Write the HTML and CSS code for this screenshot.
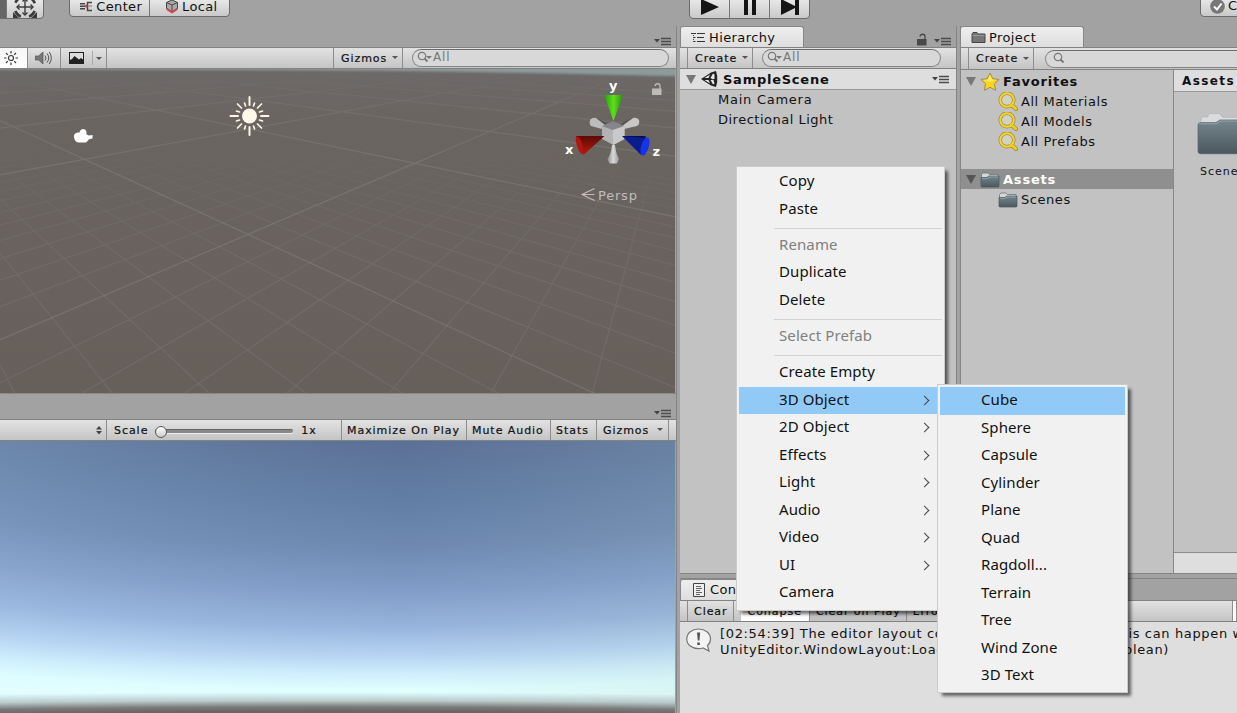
FILE: index.html
```html
<!DOCTYPE html>
<html lang="en">
<head>
	<meta charset="utf-8" />
	<meta name="viewport" content="width=device-width, initial-scale=1" />
	<title>SampleScene</title>
	<link rel="stylesheet" href="styles.css">
</head>
<body>

	<svg width="0" height="0" class="defs">
		<symbol id="i-menu" viewBox="0 0 18 9">
			<path d="M0 2h6L3 5.5z" fill="#444" />
			<path d="M7 1.5h10M7 4.5h10M7 7.5h10" stroke="#4c4c4c" stroke-width="1.3" />
		</symbol>
		<symbol id="i-lock" viewBox="0 0 10 13">
			<path d="M0 6h9.500v6.500H0z" fill="currentColor" />
			<path d="M3 3.500C3.500 .5 8 .5 8 3.500V6.500" fill="none" stroke="currentColor" stroke-width="1.300" />
		</symbol>
		<symbol id="i-find" viewBox="0 0 16 12">
			<circle cx="5" cy="5" r="3.700" fill="none" stroke="#777" stroke-width="1.200" />
			<path d="M7.500 7.500l3 3" stroke="#777" stroke-width="1.800" />
		</symbol>
		<symbol id="i-star" viewBox="0 0 18 18">
			<path d="M9 1l2.500 5 5.700.7-4.200 3.900 1.100 5.900L9 13.800l-5.100 2.700L5 10.600.8 6.700 6.500 6z" fill="#fbd51b" stroke="#9d8d50" stroke-width=".9" stroke-linejoin="round" />
			<path d="M9 2.500l1.900 4.300 4 .4-6 1.500-5.600-1.300L7 7z" fill="#fff27a" opacity=".7" />
		</symbol>
		<symbol id="i-query" viewBox="0 0 20 19">
			<path d="M13 12.500l5 4.500" stroke="#9a8a45" stroke-width="4.200" stroke-linecap="round" />
			<circle cx="9" cy="8" r="6.800" fill="#d2d1c6" stroke="#9a8a45" stroke-width="3.400" />
			<circle cx="9" cy="8" r="6.800" fill="none" stroke="#f7d62c" stroke-width="2" />
			<path d="M13.200 12.500l4.600 4.300" stroke="#f4cd16" stroke-width="2.800" stroke-linecap="round" />
		</symbol>
		<symbol id="i-folder" viewBox="0 0 20 17">
			<path d="M1.500 15V3.500L3 2h5l1.500 1.500H18V15z" fill="#d5d8d9" stroke="#6e7679" stroke-width=".8" />
			<path d="M1 6.500h6l1.500-1.500H19V15q0 1-1 1H2q-1 0-1-1z" fill="url(#g-folder)" stroke="#4b565b" stroke-width=".7" />
			<path d="M2 7.500h5.500L9 6h9" fill="none" stroke="#96a9b1" stroke-width=".8" />
		</symbol>
		<linearGradient id="g-folder" x1="0" y1="0" x2="0" y2="1">
			<stop offset="0" stop-color="#76868e" />
			<stop offset="1" stop-color="#4a585e" />
		</linearGradient>
	</svg>

	<header class="topbar">
		<div class="btns tools">
			<span class="on"></span>
			<span>
				<svg width="26" height="26" viewBox="0 0 26 26" fill="none" stroke="#3b3b3b" stroke-width="2">
					<path d="M13 5v16M5 13h16" stroke-width="1.400" />
					<path d="M10.500 7.500L13 5l2.500 2.500M10.500 18.500l2.500 2.500 2.500-2.500M7.500 10.500L5 13l2.500 2.500M18.500 10.500l2.500 2.500-2.500 2.500" stroke-width="1.400" />
					<circle cx="13" cy="13" r="10.500" stroke-width="2.600" stroke-dasharray="8 8.500" stroke-dashoffset="-4.200" />
					<path d="M1 18v6h6zM25 18v6h-6z" fill="#3b3b3b" stroke="none" />
				</svg>
			</span>
		</div>
		<div class="btns pivot">
			<span>
				<svg width="13" height="11" viewBox="0 0 13 11"><path d="M0 2h5v1.500H0zM0 4.500h5V6H0zM0 7h5v1.500H0z" fill="#444" /><path d="M12 1.500H7.500v8H12" fill="none" stroke="#444" stroke-width="1.500" /><path d="M8.500 5h3.500" stroke="#777" /><circle cx="6.500" cy="5" r="1.500" fill="#c33" /></svg>
				Center
			</span>
			<span>
				<svg width="14" height="15" viewBox="0 0 14 15"><path d="M7 1l5.500 2.500v6L7 13 1.500 9.500v-6z" fill="#aaa" stroke="#444" /><path d="M1.500 3.500L7 6l5.500-2.500M7 6v6" fill="none" stroke="#444" /><path d="M1.500 8.500L7 12l5.500-3.500V11L7 14.500 1.500 11z" fill="#c9484c" /></svg>
				Local
			</span>
		</div>
		<div class="btns play">
			<span><svg width="20" height="16"><path d="M1 0l18 8L1 16z" fill="#151515" /></svg></span>
			<span><svg width="14" height="16"><path d="M1 0h4v16H1zM9 0h4v16H9z" fill="#151515" /></svg></span>
			<span><svg width="20" height="16"><path d="M1 0l14 7V0h4v16h-4V9L1 16z" fill="#151515" /></svg></span>
		</div>
		<div class="btns collab">
			<span>
				<svg width="15" height="15" viewBox="0 0 15 15"><circle cx="7.500" cy="7.500" r="7.300" fill="#777" /><path d="M4 7.500l3 3 4.500-6" fill="none" stroke="#fff" stroke-width="2" /></svg>
				Collab
			</span>
		</div>
	</header>

	<main>

		<section class="views">
			<div class="tabbar scene-tabs"><svg class="menu-icon" width="18" height="9"><use href="#i-menu" /></svg></div>
			<div class="toolbar">
				<span class="tb sun on">
					<svg width="16" height="16" viewBox="0 0 16 16" fill="none" stroke="#3a3a3a" stroke-width="1.200"><circle cx="8" cy="8" r="2.500" /><path d="M8 1v2.500M8 12.500V15M1 8h2.500M12.500 8H15M3 3l1.800 1.800M11.200 11.200L13 13M13 3l-1.800 1.800M3 13l1.800-1.800" /></svg>
				</span>
				<span class="tb sound">
					<svg width="18" height="14" viewBox="0 0 18 14"><path d="M0 5h3.500L8 1v12L3.500 9H0z" fill="#777" stroke="#555" stroke-width=".7" /><path d="M10 4.500q2 2.500 0 5M12 2.500q3.500 4.500 0 9M14.300 1q4 6 0 12" fill="none" stroke="#555" /></svg>
				</span>
				<span class="tb fx">
					<svg width="15" height="12" viewBox="0 0 15 12"><path d="M0 0h15v12H0z" fill="#222" /><path d="M1 1h13v6.500L12 6l-2 1.500L5.500 4 3 7 1 8z" fill="#ddd" /></svg>
					<i></i><b class="caret"></b>
				</span>
				<span class="fill"></span>
				<span class="tb gizmos">Gizmos <b class="caret"></b></span>
				<div class="search wide"><svg width="16" height="12"><use href="#i-find" /></svg><b class="caret"></b>All</div>
			</div>
			<div class="scene">
				<svg width="675" height="324" viewBox="0 69 675 324">
					<defs>
						<linearGradient id="g-ground" x1="0" y1="0" x2="0" y2="1">
							<stop offset="0" stop-color="#6d6969" />
							<stop offset=".15" stop-color="#6a6561" />
							<stop offset="1" stop-color="#675f5a" />
						</linearGradient>
						<linearGradient id="g-fade" x1="0" y1="0" x2="0" y2="1">
							<stop offset=".2" stop-color="#000" />
							<stop offset=".4" stop-color="#777" />
							<stop offset=".65" stop-color="#fff" />
						</linearGradient>
						<linearGradient id="g-far" x1="0" y1="0" x2="0" y2="1">
							<stop offset=".01" stop-color="#000" />
							<stop offset=".12" stop-color="#999" />
							<stop offset=".3" stop-color="#fff" />
						</linearGradient>
						<linearGradient id="g-red" x1="0" y1="0" x2="0" y2="1"><stop offset="0" stop-color="#5c0a05" /><stop offset="1" stop-color="#b51a10" /></linearGradient>
						<linearGradient id="g-green"><stop offset="0" stop-color="#2c9a08" /><stop offset=".5" stop-color="#5be01c" /><stop offset="1" stop-color="#2b8f0a" /></linearGradient>
						<linearGradient id="g-grey"><stop offset="0" stop-color="#8f8f8f" /><stop offset=".5" stop-color="#d8d8d8" /><stop offset="1" stop-color="#999" /></linearGradient>
						<filter id="soft"><feGaussianBlur stdDeviation="1.300" /></filter>
						<mask id="m-fade" maskUnits="userSpaceOnUse" x="0" y="69" width="675" height="324"><rect y="69" width="675" height="324" fill="url(#g-fade)" /></mask>
						<mask id="m-far" maskUnits="userSpaceOnUse" x="0" y="69" width="675" height="324"><rect y="69" width="675" height="324" fill="url(#g-far)" /></mask>
					</defs>
					<rect y="69" width="675" height="324" fill="url(#g-ground)" />
					<g id="minor" mask="url(#m-fade)" fill="none" stroke="#8b8e8a" stroke-opacity=".25" stroke-width="1.200"></g>
					<g id="major" mask="url(#m-far)" fill="none" stroke="#8e908d" stroke-opacity=".36" stroke-width="1.300"></g>
					<path d="M-5 60H685V76.500Q500 71.500 340 70.500T-5 69.500z" fill="#8d9a9b" filter="url(#soft)" />

					<!-- camera -->
					<path d="M74 137q-.5-4 4-4.500h1.500q.5-3.500 4-3.500 3 .5 3 3.500v2l2.500 1 3.500-.5v3.500l-3 .5-3.500 3.500h-8q-3.500-1-4-5.500z" fill="#fff" />

					<!-- directional light -->
					<g stroke="#fbf6e6" stroke-width="2" stroke-linecap="round">
						<circle cx="249.500" cy="116" r="7.500" fill="#fdf8e8" stroke="none" />
						<path d="M249.500 97v8M249.500 127v8M230.500 116h7.500M261 116h7.500" />
						<path d="M237.500 104l4 4M257.500 124l4 4M261.500 104l-4 4M241.500 124l-4 4M244.500 103l1 3M254.500 103l-1 3M244.500 129l1-3M236.500 111l3 1M262.500 111l-3 1M236.500 121l3-1M262.500 121l-3-1M254.500 129l-1-3" stroke-width="1.700" />
					</g>

					<!-- orientation gizmo -->
					<path d="M597 118l10 5.500-1 3-9-3.500z" fill="#555" />
					<path d="M590 120q2-3 6-2l9 7-3 4-11-3q-2-2-1-6z" fill="#bcbcbc" />
					<path d="M632 118l-12 6 2 3 9-4z" fill="#555" />
					<path d="M639 120q-2-3-6-2l-11 8 2 3 13-3q3-2 2-6z" fill="#c7c7c7" />
					<path d="M602 126l11-4 11.500 4v13l-11 6-11.500-6z" fill="#b3b3b5" />
					<path d="M602 126l11-4.500 11.500 4.500-11.500 4z" fill="#85858b" />
					<path d="M613 130l11.500-4v13l-11.500 6z" fill="#c9c9c9" />
					<path d="M604 95h19l-9.500 26z" fill="url(#g-green)" />
					<path d="M576 136l28.500 0-20.500 18.500q-7-6-8-18.500z" fill="url(#g-red)" />
					<path d="M576 136.500q4-1 6 7t2 11q-4 0-6.500-7t-1.500-11z" fill="#b3150d" />
					<path d="M622 136h24l-5 19z" fill="#0b1c90" />
					<path d="M622 136h21l3 2z" fill="#050d49" />
					<ellipse cx="645" cy="146.500" rx="3.800" ry="9.400" transform="rotate(17 645 146.500)" fill="#1634e8" />
					<path d="M612 145h3q1 9 4 14l-2 4.500h-7.500l-2-4.500q4-6 4.500-14z" fill="url(#g-grey)" />
					<g class="axis">
						<text x="609" y="90">y</text>
						<text x="565" y="153.500">x</text>
						<text x="652.500" y="156">z</text>
					</g>
					<path d="M594.500 188.500l-12.500 6 12.500 6M582 194.500h12.500" fill="none" stroke="#c0bebb" stroke-width="1.100" />
					<text class="persp" x="598" y="199.500">Persp</text>
					<svg x="652" y="82.500" width="10" height="13" color="#bdbbb9"><use href="#i-lock" /></svg>
				</svg>
			</div>

			<div class="tabbar game-tabs"><svg class="menu-icon" width="18" height="9"><use href="#i-menu" /></svg></div>
			<div class="toolbar game-bar">
				<span class="tb aspect"><svg width="7" height="9"><path d="M0 3.500h6L3 0zM0 5h6L3 8.500z" fill="#444" /></svg></span>
				<span class="tb scale">Scale <span class="slider"><i></i></span> 1x</span>
				<span class="tb max">Maximize On Play</span>
				<span class="tb mute">Mute Audio</span>
				<span class="tb stats">Stats</span>
				<span class="tb giz2">Gizmos <i></i><b class="caret"></b></span>
			</div>
			<div class="game"></div>
		</section>

		<div class="right">
			<div class="upper">

				<section class="hierarchy">
					<div class="tabbar">
						<div class="tab"><svg width="15" height="12" viewBox="0 0 15 12"><path d="M0 1.500h2M3 1.500h2M6 1.500h8M3 5.500h1.500M6 5.500h7M3 9.500h1.500M6 9.500h8" stroke="#333" stroke-width="1.200" /><path d="M2.500 1v9" stroke="#444" stroke-dasharray="1 1" /></svg>Hierarchy</div>
						<svg class="lock" width="10" height="13"><use href="#i-lock" /></svg>
						<svg class="menu-icon" width="18" height="9"><use href="#i-menu" /></svg>
					</div>
					<div class="toolbar">
						<span class="tb lead"></span>
						<span class="tb create">Create <b class="caret"></b></span>
						<div class="search"><svg width="16" height="12"><use href="#i-find" /></svg><b class="caret"></b>All</div>
					</div>
					<div class="scene-row">
						<b class="fold"></b>
						<svg width="18" height="18" viewBox="0 0 18 18"><path d="M1 9L11 2.500l5-1.500 1.200 5v6L16 17l-5-1.500z" fill="#222" /><path d="M4.500 8l5.500-3.500L8.500 8zM4.500 10H8.500l1.500 3.500zM10.500 8L13 3.500l1.500 1L14.500 9l-2 .2zM10.500 10h3l1 3.500-1.500 1z" fill="#e8e8e8" /></svg>
						<strong>SampleScene</strong>
						<svg class="menu-icon" width="18" height="9"><use href="#i-menu" /></svg>
					</div>
					<ul>
						<li>Main Camera</li>
						<li class="long">Directional Light</li>
					</ul>
				</section>

				<section class="project">
					<div class="tabbar">
						<div class="tab"><svg width="15" height="13" viewBox="0 0 15 13"><path d="M1 11.500V3l1-1.500h4L7.500 3H14v8.500z" fill="#777" stroke="#444" /><path d="M1.500 4.500h12" stroke="#999" /></svg>Project</div>
					</div>
					<div class="toolbar">
						<span class="tb lead"></span>
						<span class="tb create">Create <b class="caret"></b></span>
						<div class="search cut"><svg width="16" height="12"><use href="#i-find" /></svg></div>
					</div>
					<div class="browser">
						<div class="tree">
							<div class="row"><b class="fold"></b><svg width="20" height="20"><use href="#i-star" /></svg><strong>Favorites</strong></div>
							<div class="row sub"><svg width="20" height="19"><use href="#i-query" /></svg>All Materials</div>
							<div class="row sub"><svg width="20" height="19"><use href="#i-query" /></svg>All Models</div>
							<div class="row sub"><svg width="20" height="19"><use href="#i-query" /></svg>All Prefabs</div>
							<div class="row selected"><b class="fold"></b><svg width="20" height="17"><use href="#i-folder" /></svg><strong>Assets</strong></div>
							<div class="row sub"><svg width="20" height="17"><use href="#i-folder" /></svg>Scenes</div>
						</div>
						<div class="content">
							<div class="crumb">Assets</div>
							<div class="asset">
								<svg width="54" height="44" viewBox="0 0 20 17" preserveAspectRatio="none"><path d="M1 6.500L1.500 3q.1-.6.700-.7H4q.2-1.300.8-1.300h3.700l1 1.400h9l.5 4z" fill="#d9dbdc" stroke="#aaa" stroke-width=".2" /><path d="M.4 5.500Q.4 4.500 1.400 4.500H7L8.500 3.500H19.600V15.500q0 1-1 1H1.400q-1 0-1-1z" fill="url(#g-folder)" stroke="#54626a" stroke-width=".3" /><path d="M.8 4.900H7.200L8.600 3.900H19" fill="none" stroke="#8fa3ad" stroke-width=".4" /></svg>
								<span>Scenes</span>
							</div>
							<div class="status"></div>
						</div>
					</div>
				</section>

			</div>

			<section class="console">
				<div class="tabbar">
					<div class="tab"><svg width="12" height="14" viewBox="0 0 12 14"><path d="M.5 .5h11v13H.5z" fill="#eee" stroke="#444" /><path d="M3 3.500h5M3 5.500h6M3 7.500h4M3 9.500h6M3 11.500h4" stroke="#555" stroke-width=".9" /></svg>Console</div>
				</div>
				<div class="toolbar">
					<span class="tb lead"></span>
					<span class="tb clear">Clear</span>
					<span class="gap"></span>
					<span class="tb on">Collapse</span>
					<span class="tb on2">Clear on Play</span>
					<span class="tb on2">Error Pause</span>
					<span class="fill"></span>
					<span class="tb on count"></span>
				</div>
				<div class="log">
					<svg width="26" height="25" viewBox="0 0 26 25"><path d="M12.500 1C19 1 24.500 5 24.500 11q0 4-3 6.500l1.500 5.500-6-3q-2 .6-4.500.6C6 20.600.8 17 .8 11S6 1 12.500 1z" fill="#f3f3f3" stroke="#777" stroke-width="1.200" /><path d="M11 4.500h3.200l-.8 8h-1.600zM11.300 14.500h2.600v2.500h-2.600z" fill="#555" /></svg>
					<div class="entry">
						<p class="l1">[02:54:39] The editor layout could not be fully loaded, this can happen when</p>
						<p class="l2">UnityEditor.WindowLayout:LoadWindowLayout(String, Boolean)</p>
					</div>
				</div>
			</section>
		</div>

	</main>

	<nav class="menu context">
		<a>Copy</a>
		<a>Paste</a>
		<hr>
		<a class="off">Rename</a>
		<a>Duplicate</a>
		<a>Delete</a>
		<hr>
		<a class="off">Select Prefab</a>
		<hr>
		<a>Create Empty</a>
		<a class="more active">3D Object</a>
		<a class="more">2D Object</a>
		<a class="more">Effects</a>
		<a class="more">Light</a>
		<a class="more">Audio</a>
		<a class="more">Video</a>
		<a class="more">UI</a>
		<a>Camera</a>
	</nav>

	<nav class="menu submenu">
		<a class="active">Cube</a>
		<a>Sphere</a>
		<a>Capsule</a>
		<a>Cylinder</a>
		<a>Plane</a>
		<a>Quad</a>
		<a>Ragdoll...</a>
		<a>Terrain</a>
		<a>Tree</a>
		<a>Wind Zone</a>
		<a>3D Text</a>
	</nav>

	<script src="grid.js"></script>
</body>
</html>
```
FILE: styles.css
```css
* {
	box-sizing: border-box;
}

body {
	margin: 0;
	width: 1237px;
	height: 713px;
	overflow: hidden;
	background: #a2a2a2;
	color: #111;
	font: 13px/20px "DejaVu Sans", sans-serif;
	letter-spacing: 0.75px;
	white-space: nowrap;
	display: flex;
	flex-direction: column;
}
.defs {
	position: absolute;
}
svg {
	flex: none;
}
ul, p {
	margin: 0;
	padding: 0;
	list-style: none;
}


/*Top toolbar*/
.topbar {
	height: 26px;
	flex: none;
	display: flex;
	align-items: flex-start;
	overflow: hidden;
}
.btns {
	display: flex;
	height: 22px;
	margin-top: -5px;
	border: 1px solid #6b6b6b;
	border-radius: 4px;
	background: linear-gradient(#eee, #c9c9c9);
	overflow: hidden;
	flex: none;
}
.btns span {
	display: flex;
	align-items: center;
	justify-content: center;
	gap: 3px;
	letter-spacing: 0.35px;
}
.btns span + span {
	border-left: 1px solid #777;
}
.tools {
	width: 50px;
	height: 24px;
	margin-left: -6px;
}
.tools .on {
	width: 11px;
	background: #666;
}
.tools span:last-child {
	flex: 1;
}
.pivot {
	width: 161px;
	margin-left: 25px;
}
.pivot span {
	width: 81px;
	padding: 1px 0 0 3px;
}
.play {
	width: 121px;
	height: 24px;
	margin-left: 459px;
}
.play span {
	flex: 1;
}
.collab {
	width: 80px;
	margin-left: 390px;
}
.collab span {
	padding-left: 9px;
}


/*Layout*/
main {
	flex: 1;
	display: flex;
	min-height: 0;
}
.views {
	width: 677px;
	flex: none;
	display: flex;
	flex-direction: column;
	border-right: 1px solid #858585;
}
.right {
	margin-left: 3px;
	flex: 1;
	min-width: 0;
	overflow: hidden;
	display: flex;
	flex-direction: column;
}
.upper {
	display: flex;
	height: 548px;
	gap: 3px;
	margin-bottom: 4px;
}


/*Tabs and toolbars*/
.tabbar {
	height: 21px;
	flex: none;
	display: flex;
	align-items: flex-end;
	justify-content: flex-end;
}
.tab {
	height: 21px;
	display: flex;
	align-items: center;
	gap: 3px;
	padding: 1px 0 0 10px;
	margin-right: auto;
	border: 1px solid #888;
	border-bottom: 0;
	border-radius: 3px 3px 0 0;
	background: linear-gradient(#eee, #dedede);
	letter-spacing: 0.4px;
}
.menu-icon {
	margin: 0 4px 1px 0;
}
.lock {
	color: #484848;
	margin: 0 7px 1px 0;
}
.toolbar {
	height: 22px;
	flex: none;
	display: flex;
	align-items: stretch;
	border-top: 1px solid #828282;
	border-bottom: 1px solid #828282;
	background: linear-gradient(#e2e2e2, #c4c4c4);
	font-size: 11px;
	letter-spacing: 0.95px;
	-webkit-text-stroke: 0.2px #111;
}
.tb {
	display: flex;
	align-items: center;
	flex: none;
	padding: 1px 5px 0;
	border-right: 1px solid #8c8c8c;
}
.tb i {
	width: 1px;
	height: 14px;
	background: #aaa;
}
.tb.on {
	background: linear-gradient(#f5f5f5, #fff);
}
.tb.on2 {
	background: #c3c3c3;
}
.fill {
	flex: 1;
	min-width: 0;
}
.caret {
	width: 0;
	height: 0;
	border: 3px solid transparent;
	border-top: 3.5px solid #555;
	border-bottom: 0;
}
.search {
	height: 18px;
	width: 179px;
	margin: 1px 0 0 9px;
	padding: 0 0 2px 4px;
	display: flex;
	align-items: center;
	border: 1px solid #858585;
	border-top: 1.5px solid #6d6d6d;
	border-radius: 9px;
	background: #d8d8d8;
	color: #777;
	font-size: 12px;
	letter-spacing: 0.8px;
	line-height: 15px;
	-webkit-text-stroke: 0;
}
.search .caret {
	margin: 0 1px 0 -7px;
	border-top-color: #777;
}


/*Scene view*/
.sun {
	width: 28px;
	padding: 0 0 0 3px;
}
.sound {
	width: 33px;
	padding: 0 0 0 7px;
}
.fx {
	width: 46px;
	padding: 0 0 0 8px;
}
.fx i {
	margin: 0 3px 0 8px;
}
.gizmos {
	width: 70px;
	padding: 1px 0 0 7px;
	border-left: 1px solid #8c8c8c;
}
.gizmos .caret, .create .caret {
	margin: -2px 0 0 5px;
}
.search.wide {
	width: 257px;
	margin-right: 7px;
}
.scene {
	height: 324px;
	width: 675px;
	flex: none;
	overflow: hidden;
}
.scene > svg {
	display: block;
}
.axis {
	font: bold 13px "DejaVu Sans", sans-serif;
	letter-spacing: 0;
	fill: #fff;
}
.persp {
	font-size: 13px;
	fill: #c0bebb;
	letter-spacing: 0.8px;
}


/*Game view*/
.game-tabs {
	height: 26px;
	border-top: 1px solid #888;
}
.aspect {
	width: 107px;
	padding: 0 3px 0 0;
	justify-content: flex-end;
}
.scale {
	width: 235px;
	padding: 2px 0 0 7px;
}
.slider {
	width: 138px;
	height: 4px;
	margin: 0 8px 0 7px;
	border-radius: 2px;
	background: #888;
	border-top: 1px solid #666;
	box-shadow: 0 1px 0 #eee;
	display: flex;
	align-items: center;
}
.slider i {
	width: 12px;
	height: 12px;
	flex: none;
	border: 1px solid #555;
	border-radius: 50%;
	background: linear-gradient(#fff, #ccc);
}
.max {
	width: 125px;
}
.mute {
	width: 84px;
}
.stats {
	width: 46px;
}
.giz2 {
	width: 72px;
	padding-left: 6px;
}
.giz2 i {
	margin: 0 3px 0 5px;
}
.giz2 .caret {
	margin-top: -2px;
}
/*Ground haze over the sky dome*/
.game {
	flex: 1;
	width: 675px;
	background:
		radial-gradient(ellipse 1400px 60px at 330px 308px, #6c6565 63%, rgba(116, 114, 114, 0.95) 70%, rgba(160, 172, 172, 0.6) 81%, rgba(200, 215, 215, 0) 95%),
		linear-gradient(to right, rgba(200, 235, 255, 0.12), rgba(200, 235, 255, 0) 60%, rgba(160, 185, 190, 0.16)),
		radial-gradient(ellipse 1400px 400px at 370px -127px, #5a6f97 31%, #5d7399 35%, #627da4 46%, #6e88b0 58%, #809cc8 69%, #96b4dc 78%, #b4d2f1 85%, #d0eefc 90%, #e0ffff 94%, #e6ffff 97%);
}


/*Hierarchy*/
.hierarchy {
	width: 277px;
	flex: none;
	background: #c2c2c2;
	border-right: 1px solid #858585;
	border-bottom: 1px solid #858585;
	display: flex;
	flex-direction: column;
}
.hierarchy .tabbar, .project .tabbar, .console .tabbar {
	background: #a2a2a2;
}
.hierarchy .tab, .project .tab {
	width: 124px;
}
.lead {
	width: 8px;
	padding: 0;
}
.create {
	width: 65px;
	padding: 1px 0 0 7px;
}
.scene-row {
	height: 21px;
	display: flex;
	align-items: center;
	padding-left: 6px;
	background: #dedede;
	border-bottom: 1px solid #999;
}
.fold {
	border: 5.5px solid transparent;
	border-top: 9px solid #777;
	border-bottom: 0;
}
.scene-row svg {
	margin-left: 4px;
}
strong {
	margin-left: 4px;
	letter-spacing: 0.45px;
}
.scene-row strong {
	padding-top: 2px;
	margin-left: 5px;
	letter-spacing: 0.75px;
	font-size: 13px;
}
.scene-row .menu-icon {
	margin: 0 6px 0 auto;
}
.hierarchy li {
	padding-left: 38px;
	height: 20px;
}
.hierarchy .long {
	letter-spacing: 0.5px;
}


/*Project*/
.project {
	flex: 1;
	min-width: 0;
	overflow: hidden;
	display: flex;
	flex-direction: column;
	border-left: 1px solid #858585;
}
.project .tab {
	margin-left: -1px;
}
.project .toolbar {
	height: 23px;
}
.search.cut {
	width: 260px;
	flex: none;
	margin: 2px 0 0 11px;
	padding-left: 7px;
}
.browser {
	flex: 1;
	display: flex;
	background: #c2c2c2;
	border-bottom: 1px solid #858585;
}
.tree {
	width: 213px;
	flex: none;
	border-right: 1px solid #888;
	padding-top: 1px;
}
.row {
	height: 20px;
	display: flex;
	align-items: center;
	padding: 1px 0 0 5px;
}
.row > svg {
	margin-left: 4px;
}
.row strong {
	margin-left: 3px;
	letter-spacing: 0.8px;
}
.row.sub {
	padding-left: 33px;
	gap: 3px;
	letter-spacing: 0.55px;
}
.row.selected {
	margin-top: 18px;
	background: #8f8f8f;
	color: #fff;
}
.row.selected .fold {
	border-top-color: #555;
}
.content {
	flex: 1;
	min-width: 0;
	overflow: hidden;
	display: flex;
	flex-direction: column;
}
.crumb {
	height: 22px;
	padding-left: 8px;
	background: #dedede;
	border-bottom: 1px solid #999;
	font-size: 12px;
	font-weight: bold;
	line-height: 23px;
	letter-spacing: 1.4px;
}
.asset {
	padding: 19px 0 0 23px;
	font-size: 11px;
	letter-spacing: 1px;
}
.asset svg {
	display: block;
}
.asset span {
	display: block;
	margin: 7px 0 0 3px;
}
.status {
	height: 21px;
	margin-top: auto;
	background: #dedede;
	border-top: 1px solid #8c8c8c;
}


/*Console*/
.console {
	flex: 1;
	display: flex;
	flex-direction: column;
	background: #dedede;
	border-top: 1px solid #858585;
}
.console .tab {
	padding: 0 0 0 12px;
	width: 124px;
	gap: 5px;
}
.console .clear {
	padding-left: 6px;
}
.console .gap {
	width: 7px;
}
.console .on {
	padding: 1px 7px 0;
}
.console .on2 {
	padding-left: 6px;
}
.console .count {
	width: 5px;
	padding: 0;
	border-left: 1px solid #8c8c8c;
}
.log {
	display: flex;
	padding: 4px 0 0 6px;
	line-height: 16px;
}
.log svg {
	margin: 2px 8px 0 0;
}
.entry {
	flex: 1;
	min-width: 0;
	overflow: hidden;
}
.l1 {
	letter-spacing: 0.65px;
}
.l2 {
	letter-spacing: 0.64px;
}


/*Menus*/
.menu {
	position: absolute;
	border: 1px solid #ccc;
	background: #f1f1f1;
	box-shadow: 4px 4px 3px -1px rgba(0, 0, 0, 0.55);
	padding: 2px;
	font: 15px/25px "Noto Sans", sans-serif;
	letter-spacing: 0.1px;
	color: #111;
}
.menu a {
	display: block;
	height: 27.5px;
	padding-left: 40px;
	position: relative;
}
.menu hr {
	height: 1px;
	margin: 4.7px 0 3px 35px;
	border: 0;
	background: #d2d2d2;
}
.menu .off {
	color: #808080;
}
.menu .active {
	background: #91c9f7;
}
.more::after {
	content: "";
	position: absolute;
	right: 14px;
	top: 10px;
	width: 6px;
	height: 6px;
	border: solid #444;
	border-width: 1.3px 1.3px 0 0;
	transform: rotate(45deg);
}
.context {
	left: 736px;
	top: 166px;
	width: 209px;
	height: 445px;
	padding-top: 1px;
}
.submenu {
	left: 937px;
	top: 384px;
	width: 191px;
	height: 309px;
}
.submenu a {
	padding-left: 41px;
}
```
FILE: grid.js
```js
// Ground plane to view: major lines on whole units, minor lines on tenths
const H = [-108.7, 424.5, 248, 28, 30.3, 234.3, 0.647, 0.6206];

function project(u, v) {
	const w = H[6] * u + H[7] * v + 1;
	if (w < 0.08) return null;
	return [(H[0] * u + H[1] * v + H[2]) / w, (H[3] * u + H[4] * v + H[5]) / w];
}

function line(at, range) {
	const pts = [];
	for (let t = -3; t <= range; t += 0.05) {
		const p = at(t);
		if (p) pts.push(p);
	}
	if (pts.length < 2) return '';
	const a = pts[0], b = pts[pts.length - 1];
	return `M${a[0].toFixed(1)} ${a[1].toFixed(1)}L${b[0].toFixed(1)} ${b[1].toFixed(1)}`;
}

function draw(id, from, to, range, isLine) {
	let d = '';
	for (let i = from; i <= to; i++) {
		if (!isLine(i)) continue;
		const k = i / 10;
		d += line(t => project(k, t), range) + line(t => project(t, k), range);
	}
	const path = document.createElementNS('http://www.w3.org/2000/svg', 'path');
	path.setAttribute('d', d);
	document.getElementById(id).appendChild(path);
}

draw('minor', -15, 15, 4, i => i % 10 !== 0);
draw('major', -20, 60, 30, i => i % 10 === 0);
```
